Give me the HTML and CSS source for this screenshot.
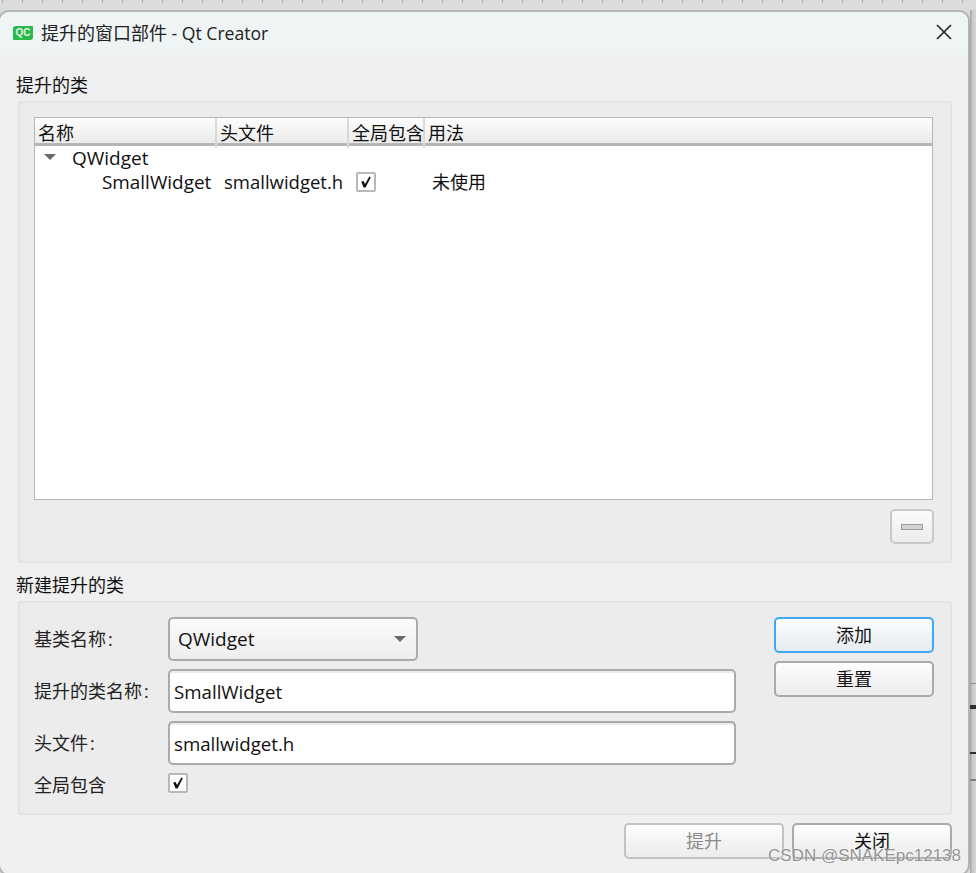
FILE: index.html
```html
<!DOCTYPE html>
<html lang="zh-CN">
<head>
    <meta charset="UTF-8">
    <meta name="viewport" content="width=device-width, initial-scale=1.0">
    <title>提升的窗口部件 - Qt Creator</title>
    <link rel="stylesheet" href="styles.css">
</head>
<body>
    <div class="screen">
        <div class="window">
            <div class="titlebar">
                <div class="title-left">
                    <span class="qt-logo">QC</span>
                    <span>提升的窗口部件<span class="title-app"> - Qt Creator</span></span>
                </div>
                <svg class="close-icon" width="16" height="16" viewBox="0 0 16 16">
                    <path d="M1 1 L15 15 M15 1 L1 15" />
                </svg>
            </div>

            <div class="content">
                <div class="group-title">提升的类</div>
                <div class="group group-list">
                    <div class="tree">
                        <div class="tree-row tree-head">
                            <div class="head-cell">名称</div>
                            <div class="head-cell">头文件</div>
                            <div class="head-cell">全局包含</div>
                            <div class="head-cell head-last">用法</div>
                        </div>
                        <div class="tree-row">
                            <div class="cell cell-parent">
                                <svg class="tree-arrow" width="12" height="6" viewBox="0 0 12 6"><path d="M0 0 H12 L6 6 Z" /></svg>
                                QWidget
                            </div>
                        </div>
                        <div class="tree-row">
                            <div class="cell cell-child">SmallWidget</div>
                            <div class="cell cell-file">smallwidget.h</div>
                            <div class="cell cell-check">
                                <span class="checkbox">
                                    <svg width="12" height="12" viewBox="0 0 12 12"><path d="M1.2 5.6 L3.6 5 L5 8 L9.4 0.6 L10.8 1.2 L5.6 11.6 L3.6 11.6 Z" /></svg>
                                </span>
                            </div>
                            <div class="cell cell-usage">未使用</div>
                        </div>
                    </div>
                    <div class="list-actions">
                        <button class="minus-btn"><span class="minus-bar"></span></button>
                    </div>
                </div>

                <div class="group-title group-title-second">新建提升的类</div>
                <div class="group group-form">
                    <div class="form-fields">
                        <div class="form-row">
                            <label class="form-label">基类名称<span class="colon">:</span></label>
                            <div class="combo">
                                <span>QWidget</span>
                                <svg class="combo-arrow" width="12" height="6" viewBox="0 0 12 6"><path d="M0 0 H12 L6 6 Z" /></svg>
                            </div>
                        </div>
                        <div class="form-row">
                            <label class="form-label">提升的类名称<span class="colon">:</span></label>
                            <div class="text-field">SmallWidget</div>
                        </div>
                        <div class="form-row">
                            <label class="form-label">头文件<span class="colon">:</span></label>
                            <div class="text-field">smallwidget.h</div>
                        </div>
                        <div class="form-row form-row-check">
                            <label class="form-label">全局包含</label>
                            <span class="checkbox">
                                <svg width="12" height="12" viewBox="0 0 12 12"><path d="M1.2 5.6 L3.6 5 L5 8 L9.4 0.6 L10.8 1.2 L5.6 11.6 L3.6 11.6 Z" /></svg>
                            </span>
                        </div>
                    </div>
                    <div class="form-buttons">
                        <button class="btn btn-focus">添加</button>
                        <button class="btn">重置</button>
                    </div>
                </div>

                <div class="footer">
                    <button class="btn btn-disabled">提升</button>
                    <button class="btn">关闭</button>
                </div>
            </div>
            <div class="watermark">CSDN @SNAKEpc12138</div>
        </div>

        <!-- bit of the window behind the dialog -->
        <div class="behind">
            <div class="line line-a"></div>
            <div class="line line-b"></div>
            <div class="line line-c"></div>
            <div class="line line-d"></div>
        </div>
    </div>
</body>
</html>
```

FILE: styles.css
```css
* {
    margin: 0;
    padding: 0;
    box-sizing: border-box;
}

body {
    font-family: "Open Sans", "Noto Sans CJK SC", sans-serif;
    font-size: 18px;
    color: #111;
    background-color: #dcdcdc;
    overflow: hidden;
}

.screen {
    display: flex;
    height: 873px;
    padding-top: 10px;
    overflow: hidden;
    background-color: #dcdcdc;
    background-image: repeating-linear-gradient(90deg, #ababab 0, #ababab 1px, transparent 1px, transparent 20px);
    background-size: 100% 3px;
    background-position: 2px 0;
    background-repeat: no-repeat;
}

.window {
    position: relative;
    flex: none;
    width: 972px;
    height: 866px;
    margin-left: -2px;
    background-color: #efefef;
    border: 2px solid #b4b4b4;
    border-radius: 11px;
    overflow: hidden;
}

.titlebar {
    display: flex;
    align-items: center;
    justify-content: space-between;
    height: 43px;
    padding: 0 16px 3px 13px;
    background-color: #eff4f5;
    color: #222;
}

.title-left {
    display: flex;
    align-items: center;
    gap: 8px;
}

.title-app {
    font-size: 17.6px;
}

.qt-logo {
    width: 20px;
    height: 14px;
    margin-top: 2px;
    background-color: #2cb94c;
    border-radius: 3px 1px 3px 1px;
    color: #dff5e4;
    font-family: "Liberation Sans", sans-serif;
    font-size: 10px;
    font-weight: 700;
    line-height: 14px;
    text-align: center;
}

.close-icon path {
    fill: none;
    stroke: #222;
    stroke-width: 1.6;
}

.content {
    padding: 20px 16px 0 18px;
}

.group-title {
    height: 20px;
    margin-left: -2px;
    line-height: 20px;
}

.group-title-second {
    margin-top: 12px;
}

.group {
    margin-top: 6px;
    background-color: #ececec;
    border: 2px solid #e3e3e3;
    border-radius: 3px;
}

.group-list {
    height: 462px;
    padding: 14px 16px 0 14px;
}

.tree {
    height: 383px;
    margin-right: 1px;
    background-color: #fff;
    border: 1.5px solid #b6b6b6;
}

.tree-row {
    display: grid;
    grid-template-columns: 182px 132px 76px 1fr;
    height: 24px;
    line-height: 24px;
    white-space: nowrap;
}

.tree-head {
    height: 28px;
    background: linear-gradient(#fdfdfd, #ebebeb);
    border-bottom: 3px solid #b6b6b6;
}

.head-cell {
    padding-left: 3px;
    border-right: 2px solid #d9d9d9;
    line-height: 30px;
}

.head-last {
    border-right: none;
}

.cell-parent {
    display: flex;
    align-items: center;
    gap: 16px;
    padding-left: 9px;
    font-size: 19px;
}

.tree-arrow {
    flex: none;
    margin-top: -2px;
}

.tree-arrow path,
.combo-arrow path {
    fill: #6a6a6a;
}

.cell-child {
    padding-left: 67px;
    font-size: 18.9px;
}

.cell-file {
    padding-left: 7px;
    font-size: 18.5px;
}

.cell-check {
    display: flex;
    align-items: center;
    padding-left: 7px;
}

.cell-usage {
    padding-left: 7px;
}

.checkbox {
    display: flex;
    align-items: center;
    justify-content: center;
    width: 20px;
    height: 20px;
    background-color: #fff;
    border: 2px solid #b8b8b8;
    border-radius: 2px;
}

.checkbox path {
    fill: #111;
}

.list-actions {
    display: flex;
    justify-content: flex-end;
    margin-top: 9px;
}

.minus-btn {
    display: flex;
    align-items: center;
    justify-content: center;
    width: 44px;
    height: 35px;
    background: linear-gradient(#fbfbfb, #ececec);
    border: 2px solid #c9c9c9;
    border-radius: 5px;
}

.minus-bar {
    width: 22px;
    height: 6px;
    background-color: #d2d2d2;
    border: 1px solid #9c9c9c;
}

.group-form {
    display: flex;
    justify-content: space-between;
    height: 214px;
    padding: 14px 16px 0 14px;
}

.form-fields {
    display: flex;
    flex-direction: column;
    gap: 8px;
    width: 702px;
}

.form-row {
    display: flex;
    align-items: center;
    height: 44px;
}

.form-row-check {
    height: 20px;
}

.form-label {
    flex: none;
    width: 134px;
    margin-top: -3px;
    color: #222;
}

.form-row-check .form-label {
    margin-top: 1px;
}

.colon {
    margin-left: 2px;
}

.combo {
    display: flex;
    align-items: center;
    justify-content: space-between;
    width: 250px;
    height: 44px;
    padding: 0 10px 0 8px;
    font-size: 19px;
    background: linear-gradient(#fbfbfb, #ededed);
    border: 2px solid #aaa;
    border-radius: 5px;
}

.text-field {
    flex: 1;
    height: 44px;
    padding-left: 4px;
    font-size: 18.7px;
    line-height: 42px;
    background-color: #fff;
    border: 2px solid #aaa;
    border-radius: 5px;
    box-shadow: inset 0 2px 0 #ececec;
}

.form-buttons {
    display: flex;
    flex-direction: column;
    gap: 8px;
    width: 160px;
}

.btn {
    width: 160px;
    height: 36px;
    padding-bottom: 2px;
    font-family: inherit;
    font-size: 18px;
    color: #111;
    background: linear-gradient(#fdfdfd, #ececec);
    border: 2px solid #aaa;
    border-radius: 5px;
}

.btn-focus {
    background: linear-gradient(#fbfcfd, #e6ebf0);
    border-color: #3fa9f5;
}

.btn-disabled {
    color: #8a8a8a;
    border-color: #c2c2c2;
}

.footer {
    display: flex;
    justify-content: flex-end;
    gap: 8px;
    margin-top: 8px;
}

.watermark {
    position: absolute;
    right: 7px;
    bottom: 6px;
    font-family: "Liberation Sans", sans-serif;
    font-size: 17px;
    line-height: 24px;
    color: rgba(120, 120, 120, 0.8);
    text-shadow: 0 0 2px #fff;
    white-space: nowrap;
}

.behind {
    flex: 1;
    height: 863px;
    background: linear-gradient(90deg, #9f9f9f 0, #c9c9c9 40%, #d4d4d4 100%);
}

.line {
    height: 1px;
    background-color: #8f8f8f;
}

.line-a {
    margin-top: 673px;
}

.line-b {
    height: 4px;
    margin-top: 21px;
    background-color: #2f2f2f;
}

.line-c {
    height: 2px;
    margin-top: 43px;
    background-color: #2f2f2f;
}

.line-d {
    height: 2px;
    margin-top: 25px;
    background-color: #808080;
}
```
